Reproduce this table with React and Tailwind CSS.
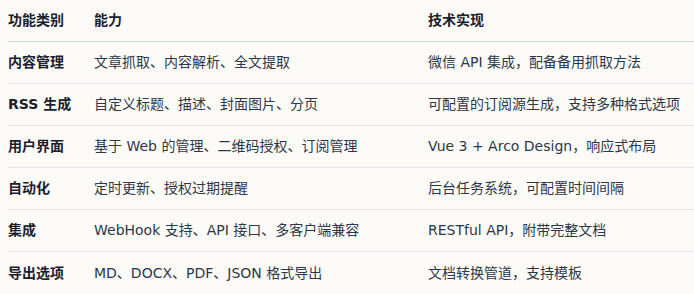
import React from "react";

const rows = [
  ["内容管理", "文章抓取、内容解析、全文提取", "微信 API 集成，配备备用抓取方法"],
  ["RSS 生成", "自定义标题、描述、封面图片、分页", "可配置的订阅源生成，支持多种格式选项"],
  ["用户界面", "基于 Web 的管理、二维码授权、订阅管理", "Vue 3 + Arco Design，响应式布局"],
  ["自动化", "定时更新、授权过期提醒", "后台任务系统，可配置时间间隔"],
  ["集成", "WebHook 支持、API 接口、多客户端兼容", "RESTful API，附带完整文档"],
  ["导出选项", "MD、DOCX、PDF、JSON 格式导出", "文档转换管道，支持模板"],
];

const font = {
  fontFamily: '"DejaVu Sans", "Noto Sans CJK SC", sans-serif',
};

export default function App() {
  return (
    <div
      className="w-[694px] h-[294px] overflow-hidden bg-[#fcfbf8] pl-2 text-[14px]"
      style={font}
    >
      {/* header */}
      <div className="grid grid-cols-[86px_334px_1fr] h-[42px] items-center border-b border-[#d0d5dd] font-bold text-[#1a202c]">
        <div>功能类别</div>
        <div>能力</div>
        <div>技术实现</div>
      </div>

      {rows.map((r, i) => (
        <div
          key={i}
          className="grid grid-cols-[86px_334px_1fr] h-[42px] items-center border-b border-[#e3e7ec] last:border-b-0 text-[#2d3748] whitespace-nowrap"
        >
          <div className="font-bold text-[#1a202c]">{r[0]}</div>
          <div>{r[1]}</div>
          <div>{r[2]}</div>
        </div>
      ))}
    </div>
  );
}
